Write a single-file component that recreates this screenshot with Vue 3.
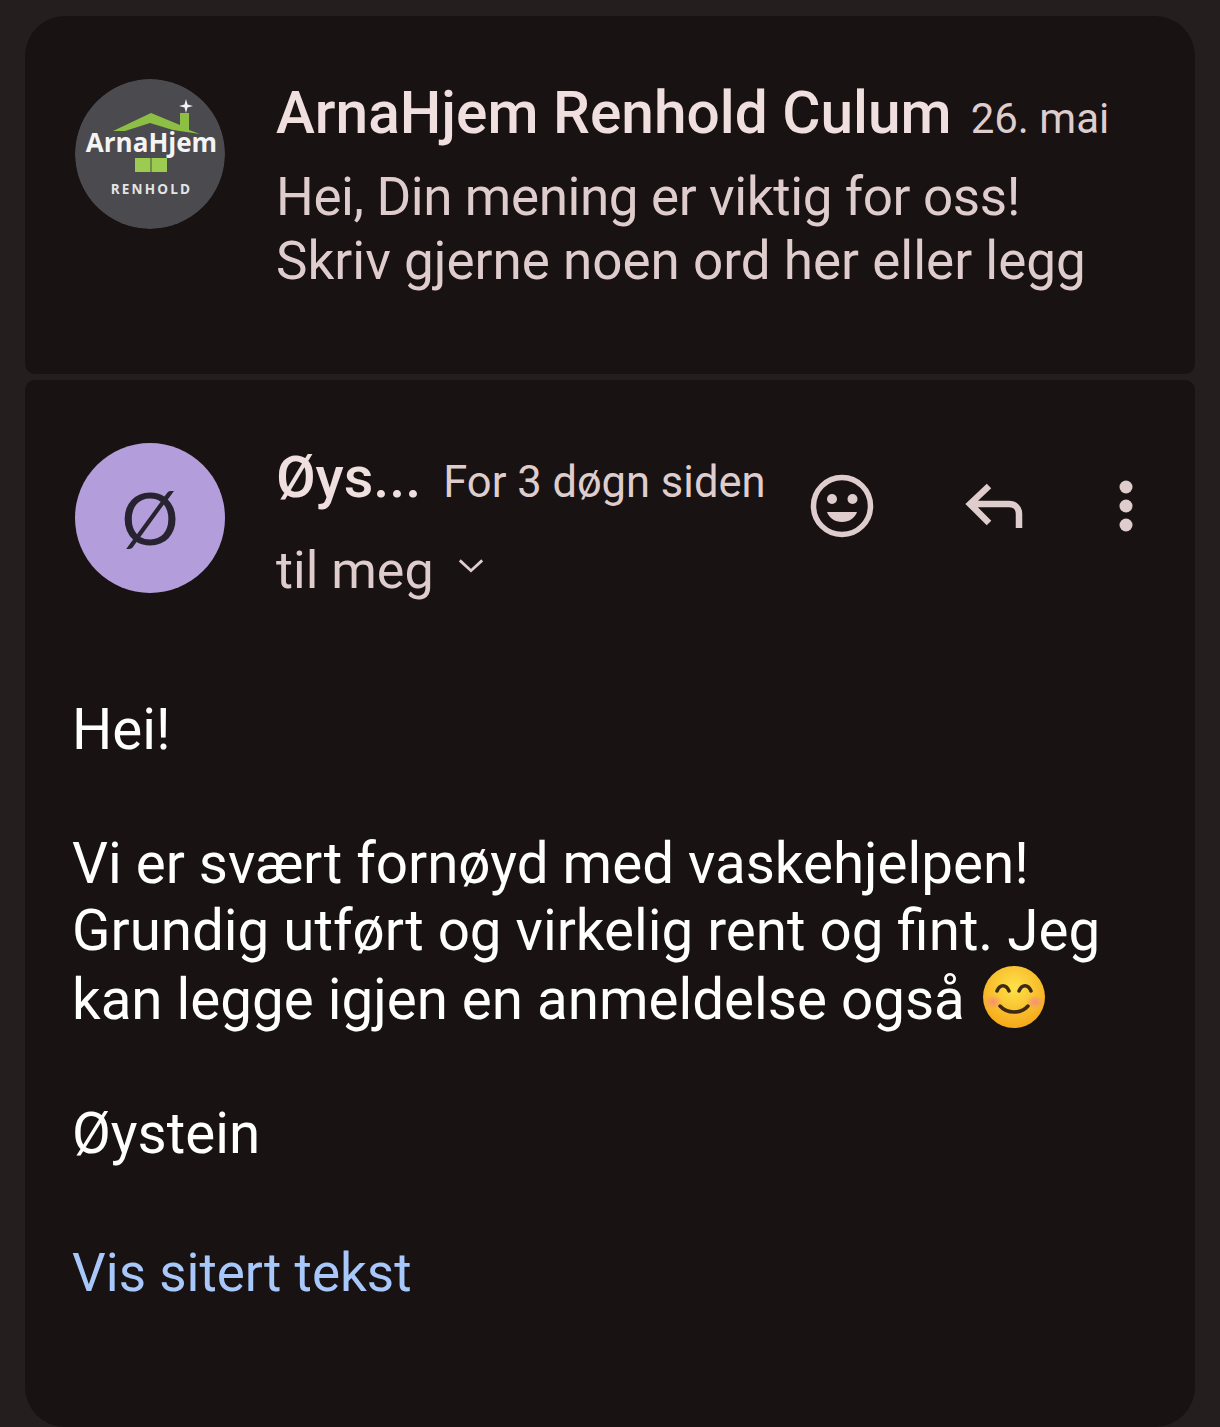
<template>
  <div class="page">
    <section class="card card-top">
      <svg class="avatar" viewBox="0 0 150 150">
        <circle cx="75" cy="75" r="75" fill="#4b4b4f" />
        <path d="M38 52 L76 34 L105 46 V34 H114 V51 L125 55 L98 51 L75 44 L50 52 Z" fill="#8dbf45" />
        <path d="M111 20 L112.500 25.500 L118 27 L112.500 28.500 L111 34 L109.500 28.500 L104 27 L109.500 25.500 Z" fill="#f2f2f2" />
        <text x="76.500" y="73" class="logo-name" text-anchor="middle">ArnaHjem</text>
        <rect x="60" y="79" width="15.500" height="14" fill="#9ccc4f" />
        <rect x="76.500" y="79" width="15.500" height="14" fill="#9ccc4f" />
        <text x="76.500" y="115" class="logo-sub" text-anchor="middle">RENHOLD</text>
      </svg>
      <div class="summary">
        <div class="summary-head">
          <span class="sender">ArnaHjem Renhold Culum</span>
          <span class="date">26. mai</span>
        </div>
        <div class="snippet"><span class="snippet-first">Hei, Din mening er viktig for oss!</span><br />Skriv gjerne noen ord her eller legg</div>
      </div>
    </section>

    <section class="card card-bottom">
      <div class="msg-head">
        <div class="avatar letter">Ø</div>
        <div class="meta">
          <div class="meta-top">
            <span class="from">Øys...</span>
            <span class="when">For 3 døgn siden</span>
          </div>
          <div class="to">
            <span>til meg</span>
            <svg class="chevron" viewBox="0 0 30 20">
              <path d="M3 4 L15 15 L27 4" fill="none" stroke="#dfcdcd" stroke-width="3" />
            </svg>
          </div>
        </div>
        <div class="actions">
          <svg class="icon-smile" viewBox="0 0 64 64">
            <circle cx="32" cy="32" r="28.500" fill="none" stroke="#dfcdcd" stroke-width="5.500" />
            <circle cx="22" cy="25" r="5" fill="#dfcdcd" />
            <circle cx="42.500" cy="25" r="5" fill="#dfcdcd" />
            <path d="M17 38 H47 C45 44 39 48 32 48 C25 48 19 44 17 38 Z" fill="#dfcdcd" />
          </svg>
          <svg class="icon-reply" viewBox="0 0 60 50">
            <path d="M26 4 L7 22 L26 41 M7 22 H46 C52 22 56 26 56 32 V46" fill="none" stroke="#dfcdcd" stroke-width="6.500" />
          </svg>
          <svg class="icon-more" viewBox="0 0 16 52">
            <circle cx="8" cy="7" r="6.500" fill="#dfcdcd" />
            <circle cx="8" cy="26" r="6.500" fill="#dfcdcd" />
            <circle cx="8" cy="45" r="6.500" fill="#dfcdcd" />
          </svg>
        </div>
      </div>
      <div class="body">
        <p>Hei!</p>
        <p>Vi er svært fornøyd med vaskehjelpen!<br />Grundig utført og virkelig rent og fint. Jeg<br />kan legge igjen en anmeldelse også <svg class="emoji" viewBox="0 0 64 64">
            <defs>
              <radialGradient id="face" cx="50%" cy="35%" r="65%">
                <stop offset="0%" stop-color="#fde24a" />
                <stop offset="100%" stop-color="#f6a81c" />
              </radialGradient>
              <radialGradient id="cheek">
                <stop offset="0%" stop-color="#f58f7c" />
                <stop offset="100%" stop-color="#f58f7c" stop-opacity="0" />
              </radialGradient>
            </defs>
            <circle cx="32" cy="32" r="31" fill="url(#face)" />
            <ellipse cx="11" cy="37" rx="9" ry="7" fill="url(#cheek)" />
            <ellipse cx="53" cy="37" rx="9" ry="7" fill="url(#cheek)" />
            <path d="M15 26 C18 19 24 19 27 26 M37 26 C40 19 46 19 49 26" fill="none" stroke="#3d2a12" stroke-width="3.500" stroke-linecap="round" />
            <path d="M18 41 C25 49 39 49 46 41" fill="none" stroke="#3d2a12" stroke-width="3.500" stroke-linecap="round" />
          </svg></p>
        <p>Øystein</p>
      </div>
      <div class="quoted">Vis sitert tekst</div>
    </section>
  </div>
</template>

<script setup>
</script>

<style>
html,
body {
  background: #241e1e;
}
</style>

<style scoped>
.page {
  width: 1220px;
  height: 1427px;
  overflow: hidden;
  padding: 16px 25px 0;
  box-sizing: border-box;
  display: flex;
  flex-direction: column;
  gap: 6px;
  background: #241e1e;
  font-family: Roboto, "Liberation Sans", sans-serif;
  color: #dfcdcd;
}

.card {
  background: #191212;
  padding: 63px 50px 0;
  box-sizing: border-box;
}

.card-top {
  height: 358px;
  border-radius: 40px 40px 10px 10px;
  display: flex;
  gap: 51px;
}

.card-bottom {
  height: 1047px;
  flex-shrink: 0;
  border-radius: 10px 10px 40px 40px;
}

.avatar {
  width: 150px;
  height: 150px;
  flex-shrink: 0;
  border-radius: 50%;
}

.logo-name {
  font-family: "Open Sans", sans-serif;
  font-size: 26px;
  font-weight: 700;
  fill: #f4f4f4;
}

.logo-sub {
  font-family: "Open Sans", sans-serif;
  font-size: 13.500px;
  font-weight: 700;
  letter-spacing: 2.200px;
  fill: #e4e4e4;
}

.summary-head {
  display: flex;
  align-items: baseline;
  gap: 19px;
  margin-top: 1px;
}

.sender {
  font-size: 58.600px;
  font-weight: 500;
  line-height: 66px;
  color: #f0dfdf;
}

.date {
  font-size: 42px;
  line-height: 66px;
}

.snippet {
  font-size: 53px;
  line-height: 64px;
  margin-top: 13px;
}

.snippet-first {
  letter-spacing: -0.400px;
}

.msg-head {
  display: flex;
}

.letter {
  display: flex;
  align-items: center;
  justify-content: center;
  box-sizing: border-box;
  padding-bottom: 3px;
  background: #b39ddb;
  color: #272330;
  font-family: Lato, Roboto, sans-serif;
  font-size: 72px;
}

.meta {
  margin-left: 51px;
  width: 490px;
  flex-shrink: 0;
}

.meta-top {
  display: flex;
  align-items: baseline;
  gap: 22px;
  line-height: 66px;
  margin-top: 2px;
}

.from {
  font-size: 57.500px;
  font-weight: 500;
  color: #f0dfdf;
}

.when {
  font-size: 43.500px;
}

.to {
  display: flex;
  align-items: center;
  gap: 23px;
  font-size: 52px;
  line-height: 64px;
  margin-top: 23px;
}

.chevron {
  width: 28px;
  height: 20px;
  margin-top: -10px;
}

.actions {
  display: flex;
  align-items: flex-start;
  margin-left: 44px;
  margin-top: 31px;
}

.icon-smile {
  width: 64px;
  height: 64px;
}

.icon-reply {
  width: 60px;
  height: 50px;
  margin-left: 89px;
  margin-top: 8px;
}

.icon-more {
  width: 16px;
  height: 52px;
  margin-left: 95px;
  margin-top: 6px;
}

.body {
  margin: 94px 0 0 -3px;
  font-size: 56.500px;
  line-height: 67.100px;
  color: #ffffff;
}

.body p {
  margin: 0 0 67px;
}

.body p:last-child {
  margin-bottom: 72px;
}

.emoji {
  width: 64px;
  height: 64px;
  margin-left: 3px;
  vertical-align: -10px;
}

.quoted {
  margin-left: -3px;
  font-size: 53px;
  line-height: 67px;
  color: #a8c7fa;
}
</style>
